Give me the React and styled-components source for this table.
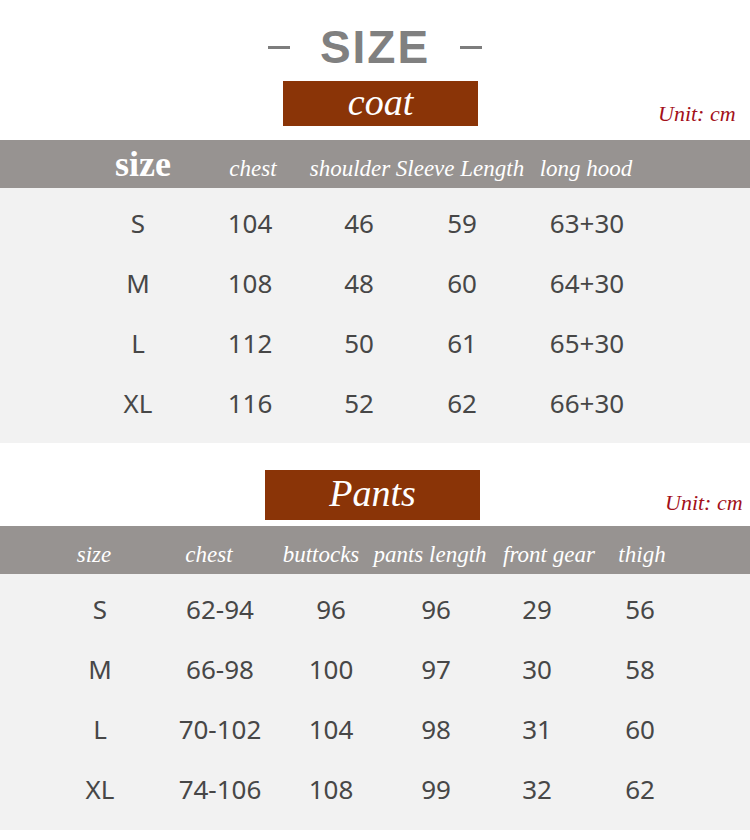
import React from "react";
import styled, { createGlobalStyle } from "styled-components";

const GlobalStyle = createGlobalStyle`
  html, body {
    margin: 0;
    padding: 0;
    background: #ffffff;
  }
  body {
    font-family: "Liberation Serif", serif;
  }
`;

const Page = styled.div`
  width: 750px;
  height: 840px;
  background: #ffffff;
  overflow: hidden;
`;

const TitleRow = styled.div`
  display: flex;
  align-items: center;
  justify-content: center;
  gap: 30px;
  padding-top: 24px;
  height: 46px;
`;

const Dash = styled.span`
  display: block;
  width: 22px;
  height: 3px;
  background: #7d7d7d;
`;

const Title = styled.h1`
  margin: 0;
  font-family: "Liberation Sans", Arial, sans-serif;
  font-weight: 700;
  font-size: 46px;
  line-height: 46px;
  letter-spacing: 2px;
  color: #808080;
`;

const BannerRow = styled.div`
  display: flex;
  align-items: flex-end;
  padding-left: ${(p) => p.left}px;
  margin-top: ${(p) => p.top}px;
`;

const Banner = styled.div`
  width: ${(p) => p.w}px;
  height: ${(p) => p.h}px;
  background: #8a3407;
  color: #ffffff;
  display: flex;
  align-items: center;
  justify-content: center;
  font-family: "Liberation Serif", serif;
  font-style: italic;
  font-size: 38px;
  line-height: 1;
  padding-bottom: 4px;
  box-sizing: border-box;
`;

const Unit = styled.span`
  margin-left: ${(p) => p.gap}px;
  margin-bottom: ${(p) => p.bottom}px;
  font-family: "Liberation Serif", serif;
  font-style: italic;
  font-size: 22px;
  line-height: 22px;
  color: #a3101a;
  white-space: nowrap;
`;

const HeaderBar = styled.div`
  margin-top: ${(p) => p.top}px;
  height: 48px;
  background: #979391;
  display: grid;
  grid-template-columns: ${(p) => p.cols};
  padding-left: ${(p) => p.left}px;
  align-items: center;
  box-sizing: border-box;
`;

const HeadCell = styled.div`
  text-align: center;
  white-space: nowrap;
  color: #ffffff;
  font-family: "Liberation Serif", serif;
  font-style: ${(p) => (p.big ? "normal" : "italic")};
  font-weight: ${(p) => (p.big ? 700 : 400)};
  font-size: ${(p) => (p.big ? 36 : 23)}px;
  line-height: 1;
  padding-top: ${(p) => (p.big ? 0 : 8)}px;
`;

const Body = styled.div`
  background: #f2f2f2;
  padding: 5px 0 ${(p) => p.bottom}px;
`;

const Row = styled.div`
  display: grid;
  grid-template-columns: ${(p) => p.cols};
  padding-left: ${(p) => p.left}px;
  height: 60px;
  align-items: center;
`;

const Cell = styled.div`
  text-align: center;
  white-space: nowrap;
  font-family: "Noto Sans", "Open Sans", sans-serif;
  font-size: 26px;
  color: #474747;
`;

const coat = {
  headCols: "110px 110px 84px 136px 116px",
  headLeft: 88,
  bodyCols: "110px 114px 104px 102px 148px",
  bodyLeft: 83,
  heads: ["size", "chest", "shoulder", "Sleeve Length", "long hood"],
  rows: [
    ["S", "104", "46", "59", "63+30"],
    ["M", "108", "48", "60", "64+30"],
    ["L", "112", "50", "61", "65+30"],
    ["XL", "116", "52", "62", "66+30"],
  ],
};

const pants = {
  headCols: "108px 122px 102px 116px 122px 64px",
  headLeft: 40,
  bodyCols: "120px 120px 102px 108px 94px 112px",
  bodyLeft: 40,
  heads: ["size", "chest", "buttocks", "pants length", "front gear", "thigh"],
  rows: [
    ["S", "62-94", "96", "96", "29", "56"],
    ["M", "66-98", "100", "97", "30", "58"],
    ["L", "70-102", "104", "98", "31", "60"],
    ["XL", "74-106", "108", "99", "32", "62"],
  ],
};

function SizeTable({ data, bigFirst, headTop, bottom }) {
  return (
    <>
      <HeaderBar cols={data.headCols} left={data.headLeft} top={headTop}>
        {data.heads.map((h, i) => (
          <HeadCell key={h} big={bigFirst && i === 0}>
            {h}
          </HeadCell>
        ))}
      </HeaderBar>
      <Body bottom={bottom}>
        {data.rows.map((r) => (
          <Row key={r[0]} cols={data.bodyCols} left={data.bodyLeft}>
            {r.map((v, i) => (
              <Cell key={i}>{v}</Cell>
            ))}
          </Row>
        ))}
      </Body>
    </>
  );
}

export default function App() {
  return (
    <Page>
      <GlobalStyle />
      <TitleRow>
        <Dash />
        <Title>SIZE</Title>
        <Dash />
      </TitleRow>
      <BannerRow left={283} top={11}>
        <Banner w={195} h={45}>coat</Banner>
        <Unit gap={180} bottom={1}>Unit: cm</Unit>
      </BannerRow>
      <SizeTable data={coat} bigFirst headTop={14} bottom={10} />
      <BannerRow left={265} top={27}>
        <Banner w={215} h={50}>Pants</Banner>
        <Unit gap={185} bottom={6}>Unit: cm</Unit>
      </BannerRow>
      <SizeTable data={pants} headTop={6} bottom={11} />
    </Page>
  );
}
